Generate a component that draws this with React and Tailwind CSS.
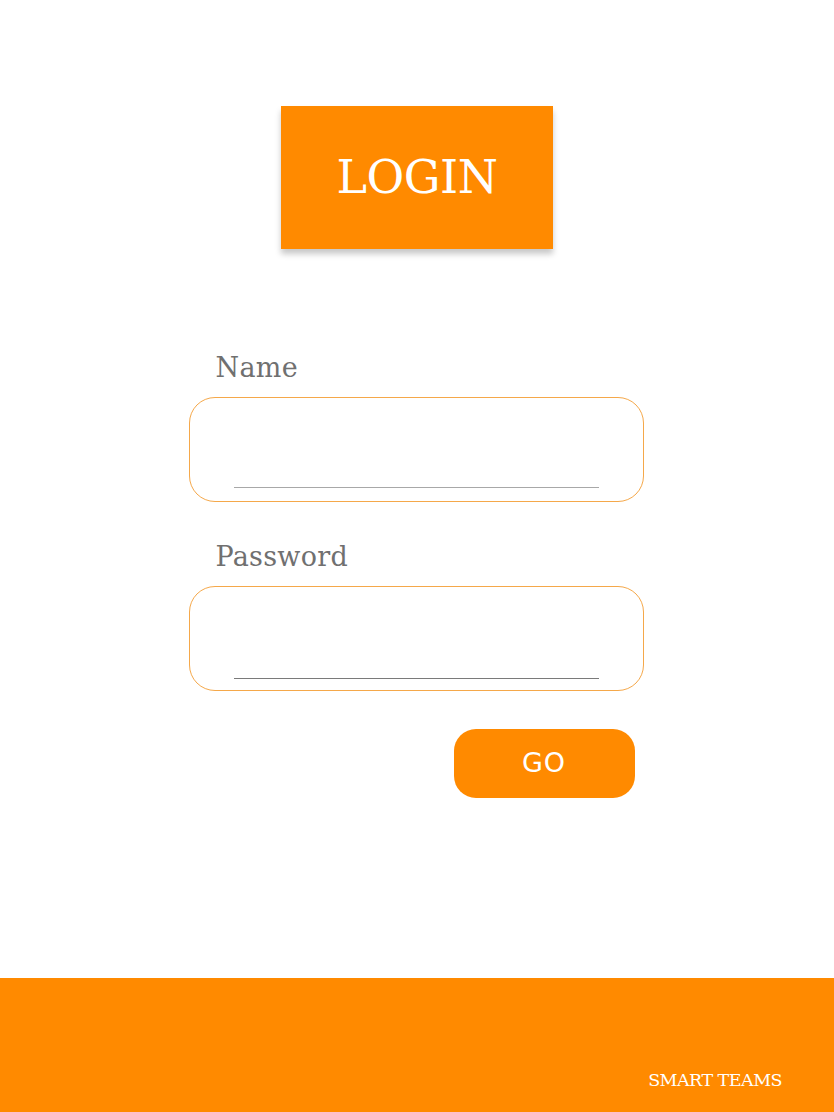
export default function App() {
  const slab = { fontFamily: '"DejaVu Serif", "Liberation Serif", serif' };

  const Field = ({ label, lineColor, lineGap }) => (
    <div>
      <p className="pl-[27px] text-[27px] leading-none tracking-[0.01em] text-[#707070]" style={slab}>{label}</p>
      <div className={`mt-[16px] h-[105px] rounded-[26px] border border-[#f5a84a] flex items-end pl-[44px] pr-[44px] ${lineGap}`}>
        <div className={`h-[1.5px] w-full ${lineColor}`} />
      </div>
    </div>
  );

  return (
    <div className="min-h-screen w-full bg-white flex flex-col">
      <main className="flex-1 flex flex-col items-center">
        <div className="mt-[106px] w-[272px] h-[143px] bg-[#ff8a00] shadow-[0_5px_6px_rgba(0,0,0,0.22)] flex items-center justify-center">
          <span className="text-[46px] text-white tracking-[-0.01em]" style={slab}>LOGIN</span>
        </div>

        <div className="mt-[105px] w-[455px] -translate-x-[1px] flex flex-col">
          <Field label="Name" lineColor="bg-[#a8a8a8]" lineGap="pb-[13px]" />
          <div className="mt-[41px]">
            <Field label="Password" lineColor="bg-[#7a7a7a]" lineGap="pb-[11px]" />
          </div>
          <div className="mt-[38px] flex justify-end pr-[9px]">
            <button
              className="w-[181px] h-[69px] rounded-[22px] bg-[#ff8a00] text-white text-[27px] tracking-[0.03em]"
              style={{ fontFamily: '"DejaVu Sans", "Liberation Sans", sans-serif' }}
            >
              GO
            </button>
          </div>
        </div>
      </main>

      <footer className="h-[134px] bg-[#ff8a00] flex items-end justify-end pr-[52px] pb-[19px]">
        <span className="text-[17.5px] text-white tracking-[-0.03em]" style={slab}>SMART TEAMS</span>
      </footer>
    </div>
  );
}
